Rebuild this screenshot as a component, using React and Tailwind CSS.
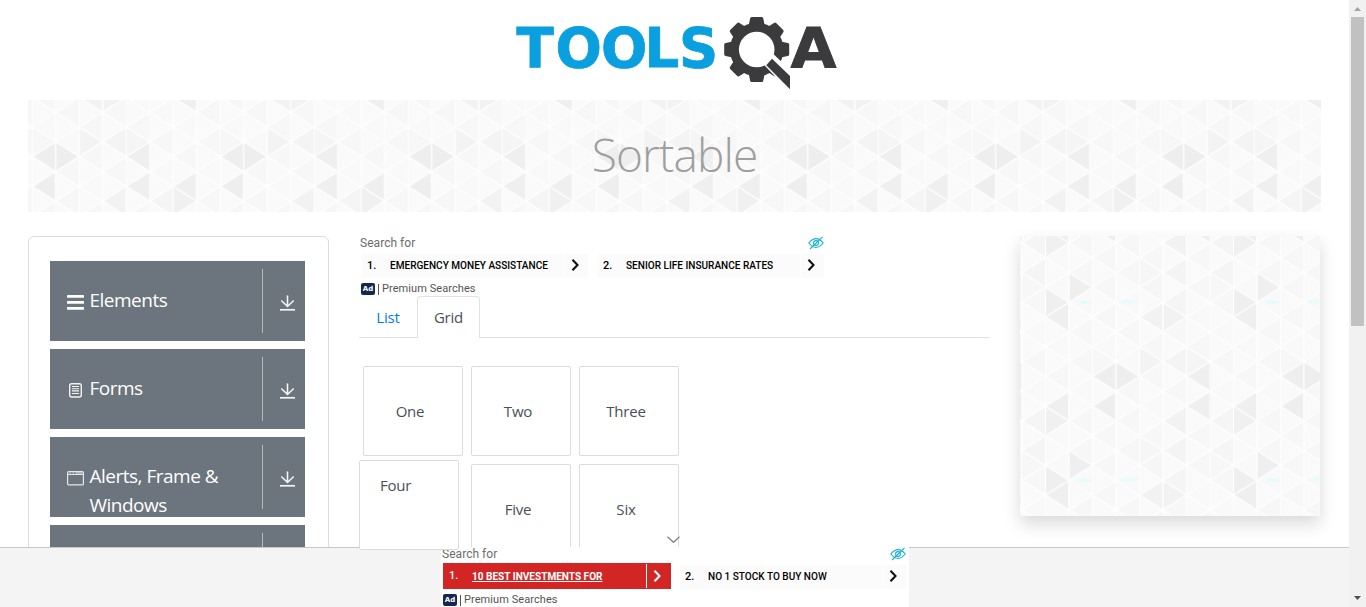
import React from "react";

const COL = 23.5;
const ROW = 178 / 12;

// Shade of individual triangles, keyed by "column,row" inside one tile.
const SHADES = {
  "1,10": "#f0f0f0", "3,9": "#eeeeee", "6,10": "#f2f2f2", "2,1": "#efefef",
  "1,2": "#efefef", "1,3": "#efefef", "5,3": "#f2f2f2", "6,3": "#f2f2f2",
  "6,2": "#f5f5f5", "5,6": "#f3f3f3", "6,6": "#f4f4f4", "7,6": "#f5f5f5",
  "3,7": "#eeeeee", "4,7": "#eeeeee", "7,7": "#efefef", "1,9": "#efefef",
  "7,9": "#efefef", "6,0": "#f4f4f4", "0,0": "#f5f5f5", "5,0": "#f6f6f6",
  "5,1": "#f6f6f6", "0,10": "#f5f5f5", "2,6": "#f7f7f7", "3,6": "#f7f7f7",
  "0,6": "#f7f7f7", "0,1": "#f7f7f7", "3,1": "#f7f7f7",
};

function shadeOf(s, m) {
  const row = (m + 12) % 12;
  const known = SHADES[s + "," + row];
  if (known) return known;
  if ((s + row) % 2 === 0) return (s * 3 + row) % 5 < 3 ? "#f7f7f7" : "#f9f9f9";
  return (s * 5 + row * 3) % 4 === 0 ? "#f8f8f8" : "#fafafa";
}

function Triangles({ id, x, y, tint }) {
  const shapes = [];
  for (let s = 0; s < 8; s++) {
    for (let m = -1; m <= 13; m++) {
      const l = s * COL;
      const r = l + COL;
      const c = m * ROW;
      const left = (s + m + 12) % 2 === 0;
      const points = left
        ? `${l},${c} ${r},${c - ROW} ${r},${c + ROW}`
        : `${r},${c} ${l},${c - ROW} ${l},${c + ROW}`;
      shapes.push(
        <polygon key={s + "_" + m} points={points} fill={shadeOf(s, m)} stroke="#fefefe" strokeWidth="1.2" strokeLinejoin="round" />
      );
    }
  }
  return (
    <svg className="block h-full w-full">
      <defs>
        <pattern id={id} width="188" height="178" patternUnits="userSpaceOnUse" patternTransform={`translate(${x} ${y})`}>
          {shapes}
          {tint && (
            <g fill="#dcfdfd">
              <ellipse cx="63" cy="29.4" rx="7" ry="1.3" />
              <ellipse cx="106.5" cy="29" rx="10" ry="2.2" opacity="0.5" />
            </g>
          )}
        </pattern>
      </defs>
      <rect width="100%" height="100%" fill={`url(#${id})`} />
    </svg>
  );
}

function Logo() {
  const teeth = [0, 45, 90, 135, 180, 225, 270, 315];
  return (
    <svg width="350" height="95" viewBox="0 0 350 95" className="block">
      <text x="16.5 55.500 101 144.500 179" y="61.600" fill="#0a9fdf" stroke="#0a9fdf" strokeWidth="0.8" fontFamily="DejaVu Sans" fontWeight="700" fontSize="54.5">TOOLS</text>
      <g transform="translate(256.7 44.5)" fill="#3b3a3c">
        {teeth.map((a) => (
          <path key={a} d="M-8 -24 L-6.600 -31 Q-6.400 -32.500 -5 -32.500 H5 Q6.400 -32.500 6.600 -31 L8 -24 Z" transform={`rotate(${a})`} />
        ))}
        <circle r="26.800" />
        <circle r="17.800" fill="#fff" />
        <path d="M6.500 14.500 L16.200 4 L38 25 V46 L30 39 Z" fill="#fff" />
        <path d="M15.300 9.300 L33.300 26.500 V39.800 L9.600 15.800 Z" />
      </g>
      <text x="290.5" y="61.600" fill="#3b3a3c" stroke="#3b3a3c" strokeWidth="0.8" fontFamily="DejaVu Sans" fontWeight="700" fontSize="54.5" textLength="46" lengthAdjust="spacingAndGlyphs">A</text>
    </svg>
  );
}

const ICONS = {
  menu: (
    <g fill="#fff">
      <rect y="2" width="17" height="2.800" rx="0.6" />
      <rect y="8" width="17" height="2.800" rx="0.6" />
      <rect y="14" width="17" height="2.800" rx="0.6" />
    </g>
  ),
  form: (
    <g fill="none" stroke="#f1f2f3">
      <rect x="2.700" y="2.700" width="11.600" height="13.300" rx="2" strokeWidth="1.400" />
      <path d="M5 5.500 H12 M5 7.700 H12 M5 9.900 H12 M5 12.500 H12" strokeWidth="1.100" />
    </g>
  ),
  window: (
    <g fill="none" stroke="#e3e5e7">
      <rect x="0.600" y="2.600" width="15.800" height="13.300" rx="1" strokeWidth="1.200" />
      <path d="M0.500 5.500 H16.500" strokeWidth="1" />
      <path d="M2.500 4 H4 M5.500 4 H7 M8.500 4 H15.500" strokeWidth="1" />
    </g>
  ),
};

function MenuItem({ icon, children }) {
  return (
    <div className="flex h-20 shrink-0 items-start overflow-hidden bg-[#6c757d] pl-[17px] text-white">
      <svg width="17" height="18" viewBox="0 0 17 18" className="mt-8 shrink-0">{icon && ICONS[icon]}</svg>
      <div className="ml-[5px] mt-[25px] w-[173px] pl-[0.5px] font-['Open_Sans',sans-serif] text-[19px] leading-[29px] tracking-[-0.5px]">{children}</div>
      <div className="mt-2 h-16 w-px shrink-0 bg-[#b7b9bb]" />
      <svg width="16" height="18" viewBox="0 0 16 18" className="ml-[17px] mt-[33px] shrink-0" fill="none" stroke="#f4f5f5" strokeWidth="1.600">
        <path d="M7.500 1.500 V12.500 M1.300 6.500 L7.500 12.500 L13.700 6.500" />
        <path d="M0 15.800 H15" strokeWidth="1.700" />
      </svg>
    </div>
  );
}

function Chevron({ color }) {
  return (
    <svg width="9" height="14" viewBox="0 0 9 14" className="-mt-[2px]" fill="none" stroke={color} strokeWidth="2.100">
      <path d="M1.500 1.800 L6.500 7 L1.500 12.200" />
    </svg>
  );
}

function Eye() {
  return (
    <svg width="16" height="14" viewBox="0 0 16 14" fill="none" stroke="#16b0cf" strokeWidth="1.100">
      <path d="M0.800 7 Q8 -1.800 15.200 7 Q8 15.800 0.800 7 Z" />
      <circle cx="8" cy="7" r="2.400" />
      <path d="M2 13 L14.500 0.800" />
    </svg>
  );
}

function AdRow({ n, label, hot }) {
  return hot ? (
    <div className="flex h-[26px] w-[228px] items-center bg-[#d22624] pt-px text-white">
      <span className="w-[23px] pl-[6px] text-[11px]">{n}.</span>
      <span className="w-[180px] pl-[6px] font-bold underline underline-offset-1">{label}</span>
      <span className="-mt-px h-[24px] w-px bg-white" />
      <span className="pl-[6px]"><Chevron color="#fff" /></span>
    </div>
  ) : (
    <div className="flex h-6 w-[226px] items-center bg-[#fbfbfb] text-black">
      <span className="w-[28px] pl-[5px] text-[11px]">{n}.</span>
      <span className="w-[174px]">{label}</span>
      <span className="h-6 w-px bg-white" />
      <span className="pl-[6px]"><Chevron color="#111" /></span>
    </div>
  );
}

function Ad({ items, hot }) {
  return (
    <div className="font-[Roboto,sans-serif]">
      <div className="flex h-[16px] items-center justify-between text-xs text-[#6d6d6d]">
        <span className="-mt-[2px] tracking-[0.04px]">Search for</span>
        <span className={hot ? "mr-0 -mt-[2px]" : "mr-px -mt-[2px]"}><Eye /></span>
      </div>
      <div className={hot ? "flex h-[26px] items-end gap-[9px] pl-px text-[10.05px] font-medium" : "mt-px flex h-[26px] items-center gap-[10px] pl-[2px] text-[10.05px] font-medium"}>
        {items.map((label, i) => <AdRow key={label} n={i + 1} label={label} hot={hot && i === 0} />)}
      </div>
      <div className={hot ? "mt-[4px] flex h-[14px] items-center pl-px text-[11px] text-[#555]" : "mt-[3px] flex h-[14px] items-center pl-px text-[11px] text-[#555]"}>
        <span className="flex h-3 w-[14px] items-center justify-center rounded-[2px] bg-[#14284f] font-['DejaVu_Sans',sans-serif] text-[7px] font-bold text-white">Ad</span>
        <span className="ml-[3px] mr-[3px] h-[11px] w-px bg-[#555]" />
        <span className="tracking-[0.07px]">Premium Searches</span>
      </div>
    </div>
  );
}

function Cell({ children }) {
  return <div className="flex h-[90px] w-[100px] items-center justify-center rounded-[2px] border border-[#dcdcdc] bg-white pr-[6px]">{children}</div>;
}

export default function App() {
  return (
    <div className="flex h-[607px] w-[1366px] overflow-hidden bg-white">
      <div className="relative flex w-[1349px] shrink-0 flex-col">
        <div className="h-[547px] shrink-0 overflow-hidden">
          <header className="pl-[500px] pt-[5px]"><Logo /></header>
          <div className="relative ml-7 h-[112px] w-[1293px]">
            <Triangles id="banner" x={121.7} y={-47.1} />
            <h1 className="absolute inset-0 flex items-center justify-center pb-[4px] font-['Open_Sans',sans-serif] text-[46px] font-light leading-none tracking-[-0.9px] text-[#9f9f9f]">Sortable</h1>
          </div>
          <div className="flex pl-7 pt-6">
            <aside className="flex h-[400px] w-[301px] shrink-0 flex-col gap-2 rounded-md border border-[#dcdcdc] pl-[21px] pr-[23px] pt-6">
              <MenuItem icon="menu">Elements</MenuItem>
              <MenuItem icon="form">Forms</MenuItem>
              <MenuItem icon="window">Alerts, Frame &amp; Windows</MenuItem>
              <MenuItem />
            </aside>
            <main className="ml-[30px] w-[631px] shrink-0 font-['Open_Sans',sans-serif] text-[15px] tracking-[-0.2px] text-[#495057]">
              <div className="ml-px w-[465px] tracking-normal"><Ad items={["EMERGENCY MONEY ASSISTANCE", "SENIOR LIFE INSURANCE RATES"]} /></div>
              <div className="flex h-[42px] border-b border-[#dee2e6]">
                <div className="flex w-[58px] items-center justify-center pt-px text-[#007bff]">List</div>
                <div className="flex h-[42px] w-[63px] items-center justify-center rounded-t border border-b-0 border-[#dee2e6] bg-white">Grid</div>
              </div>
              <div className="ml-1 mt-7 grid w-[316px] grid-cols-3 gap-2">
                <Cell>One</Cell>
                <Cell>Two</Cell>
                <Cell>Three</Cell>
                <div />
                <Cell>Five</Cell>
                <Cell>Six</Cell>
              </div>
            </main>
            <div className="ml-[30px] h-[280px] w-[300px] shrink-0 shadow-[0_8px_16px_rgba(0,0,0,0.15)]">
              <Triangles id="side" x={2} y={36.7} tint />
            </div>
          </div>
        </div>
        <footer className="flex h-[60px] shrink-0 bg-[#f4f4f4]">
          <div className="w-[441px] border-t border-[#c6c6c6]" />
          <div className="w-[468px] bg-white pl-px pr-[3px]"><Ad hot items={["10 BEST INVESTMENTS FOR", "NO 1 STOCK TO BUY NOW"]} /></div>
          <div className="flex-1 border-t border-[#c6c6c6]" />
        </footer>
        <div className="absolute left-[359px] top-[460px] h-[90px] w-[100px] rounded-[2px] border border-[#dcdcdc] bg-white pl-5 pt-[12px] font-['Open_Sans',sans-serif] text-[15px] leading-6 tracking-[-0.2px] text-[#495057]">Four</div>
        <svg width="14" height="8" viewBox="0 0 14 8" className="absolute left-[667px] top-[536px]" fill="none" stroke="#858585" strokeWidth="1.300">
          <path d="M0.500 0.800 L6.500 6.300 L12.500 0.800" />
        </svg>
      </div>
      <div className="flex w-[17px] shrink-0 flex-col items-center justify-between bg-[#f1f1f1]">
        <div>
          <svg width="13" height="17" className="block"><path d="M3 11 L6.500 7 L10 11 Z" fill="#a3a3a3" /></svg>
          <div className="h-[309px] w-[13px] bg-[#c1c1c1]" />
        </div>
        <svg width="13" height="17" className="block"><path d="M3 6 L6.500 10 L10 6 Z" fill="#505050" /></svg>
      </div>
    </div>
  );
}
